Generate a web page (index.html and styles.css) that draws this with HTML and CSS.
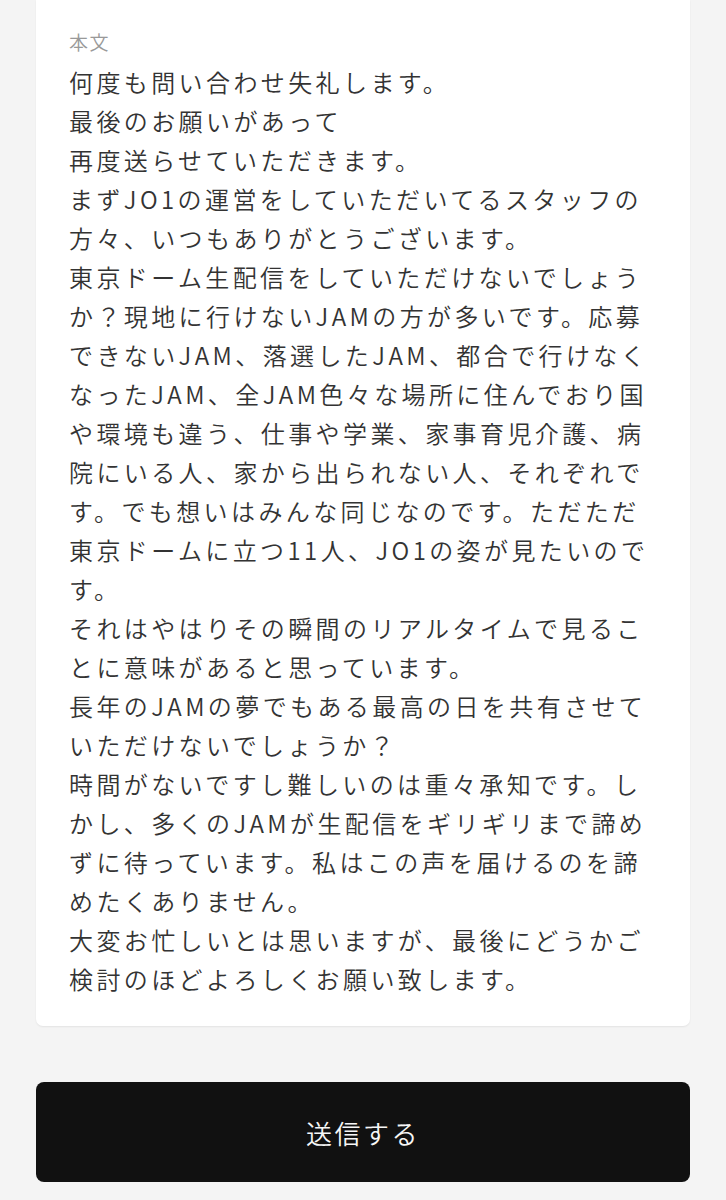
FILE: index.html
```html
<!DOCTYPE html>
<html lang="ja">
<head>
<meta charset="utf-8">
<link rel="stylesheet" href="styles.css">
</head>
<body>
<main class="page">
  <section class="card">
    <div class="label">本文</div>
    <p class="body">何度も問い合わせ失礼します。<br>最後のお願いがあって<br>再度送らせていただきます。<br>まずJO1の運営をしていただいてるスタッフの<br>方々、いつもありがとうございます。<br>東京ドーム生配信をしていただけないでしょう<br>か？現地に行けないJAMの方が多いです。応募<br>できないJAM、落選したJAM、都合で行けなく<br>なったJAM、全JAM色々な場所に住んでおり国<br>や環境も違う、仕事や学業、家事育児介護、病<br>院にいる人、家から出られない人、それぞれで<br>す。でも想いはみんな同じなのです。ただただ<br>東京ドームに立つ11人、JO1の姿が見たいので<br>す。<br>それはやはりその瞬間のリアルタイムで見るこ<br>とに意味があると思っています。<br>長年のJAMの夢でもある最高の日を共有させて<br>いただけないでしょうか？<br>時間がないですし難しいのは重々承知です。し<br>かし、多くのJAMが生配信をギリギリまで諦め<br>ずに待っています。私はこの声を届けるのを諦<br>めたくありません。<br>大変お忙しいとは思いますが、最後にどうかご<br>検討のほどよろしくお願い致します。</p>
  </section>
  <button class="submit" type="button">送信する</button>
</main>
</body>
</html>
```
FILE: styles.css
```css
html, body {
  margin: 0;
  padding: 0;
  background: #f4f4f4;
}
body {
  font-family: "Noto Sans CJK JP", "Noto Sans", sans-serif;
  color: #333;
}
.page {
  padding: 0 36px;
  display: flex;
  flex-direction: column;
}
.card {
  background: #fff;
  border-radius: 0 0 7px 7px;
  box-shadow: 0 1px 2px rgba(0, 0, 0, 0.07);
  padding: 28px 33px 28px;
}
.label {
  font-size: 19px;
  line-height: 27px;
  color: #999;
  letter-spacing: 1.5px;
  font-weight: 350;
}
.body {
  margin: 7px 0 0;
  font-size: 24px;
  line-height: 39px;
  letter-spacing: 3.4px;
  white-space: nowrap;
  color: #333;
  font-weight: 350;
}
.submit {
  margin-top: 56px;
  height: 100px;
  border: none;
  border-radius: 8px;
  background: #111;
  color: #f6f6f6;
  font-family: inherit;
  font-size: 26px;
  letter-spacing: 2.5px;
  font-weight: 350;
  padding: 0;
}
```
